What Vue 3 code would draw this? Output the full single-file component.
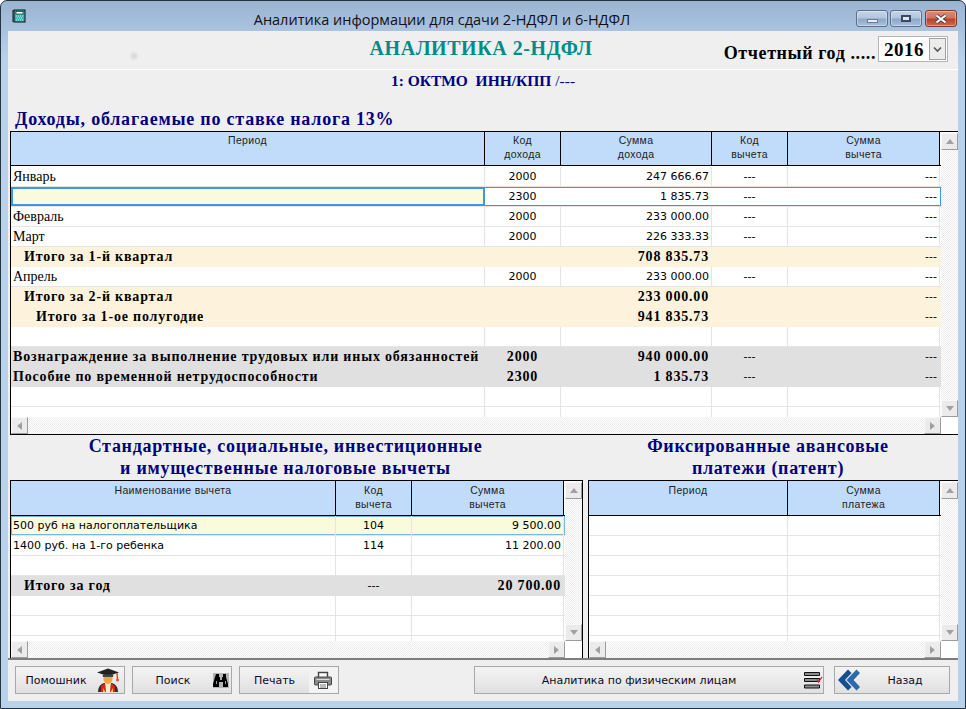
<template>
  <div class="window">
    <!-- Title bar -->
    <div class="titlebar">
      <svg class="app-icon" width="14" height="14" viewBox="0 0 14 14">
        <rect x="2" y="1" width="11" height="12" fill="#2fb5b5" stroke="#111" />
        <rect x="4" y="2.5" width="7" height="2.5" fill="#fff" stroke="#111" stroke-width="0.6" />
        <path d="M4 7h1M6 7h1M8 7h1M10 7h1M5 9h1M7 9h1M9 9h1M4 11h1M6 11h1M8 11h1M10 11h1" stroke="#d8f5f5" />
        <path d="M0 2h2M0 4h2M0 6h2M0 8h2M0 10h2M0 12h2" stroke="#111" />
      </svg>
      <div class="title-text">Аналитика информации для сдачи 2-НДФЛ и 6-НДФЛ</div>
      <div class="win-btns">
        <div class="win-btn"><span class="glyph-min"></span></div>
        <div class="win-btn"><span class="glyph-max"></span></div>
        <div class="win-btn close">
          <svg width="16" height="10" viewBox="0 0 16 10">
            <path d="M3.5 1.5 L12.5 8.5 M12.5 1.5 L3.5 8.5" stroke="#4a3a3a" stroke-width="3.6" />
            <path d="M3.5 1.5 L12.5 8.5 M12.5 1.5 L3.5 8.5" stroke="#fff" stroke-width="2.2" />
          </svg>
        </div>
      </div>
    </div>

    <div class="client">
      <div class="top-strip">
        <div></div>
        <div class="main-title">АНАЛИТИКА 2-НДФЛ</div>
        <div class="year-box">
          <span class="year-label">Отчетный год .....</span>
          <div class="combo">
            <span class="combo-value">2016</span>
            <span class="combo-btn">
              <svg width="9" height="7" viewBox="0 0 9 7"><path d="M1 1.5 L4.5 5 L8 1.5" fill="none" stroke="#555" stroke-width="1.6" /></svg>
            </span>
          </div>
        </div>
      </div>
      <div class="org-line"><b>1: ОКТМО&nbsp;&nbsp;ИНН/КПП</b> /---</div>
      <div class="section-title">Доходы, облагаемые по ставке налога 13%</div>

      <!-- Income grid -->
      <div class="grid grid-income">
        <div class="viewport">
          <div class="grid-head">
            <div
              v-for="(col, i) in incomeColumns"
              :key="i"
              class="head-cell"
              :style="{ width: col.width + 'px' }"
            >{{ col.label }}<br v-if="col.label2" />{{ col.label2 }}</div>
          </div>
          <div
            v-for="(row, r) in incomeRows"
            :key="r"
            class="row"
            :class="row.kind"
          >
            <div
              v-for="(col, i) in incomeColumns"
              :key="i"
              class="cell"
              :class="col.align"
              :style="{ width: col.width + 'px', paddingLeft: i === 0 && row.indent ? row.indent + 'px' : null }"
            >{{ row.cells[i] }}</div>
          </div>
        </div>
        <div class="vscroll">
          <div class="sb-btn"><i class="tri up"></i></div>
          <div class="track"></div>
          <div class="sb-btn"><i class="tri down"></i></div>
        </div>
        <div class="hscroll">
          <div class="sb-btn"><i class="tri left"></i></div>
          <div class="track"></div>
          <div class="sb-btn"><i class="tri right"></i></div>
        </div>
        <div class="corner"></div>
      </div>

      <!-- Lower grids -->
      <div class="lower">
        <div v-for="panel in panels" :key="panel.id" class="panel" :class="panel.id">
          <div class="panel-title">{{ panel.title1 }}<br />{{ panel.title2 }}</div>
          <div class="grid">
            <div class="viewport">
              <div class="grid-head">
                <div
                  v-for="(col, i) in panel.columns"
                  :key="i"
                  class="head-cell"
                  :style="{ width: col.width + 'px' }"
                >{{ col.label }}<br v-if="col.label2" />{{ col.label2 }}</div>
              </div>
              <div
                v-for="(row, r) in panel.rows"
                :key="r"
                class="row"
                :class="row.kind"
              >
                <div
                  v-for="(col, i) in panel.columns"
                  :key="i"
                  class="cell"
                  :class="col.align"
                  :style="{ width: col.width + 'px', paddingLeft: i === 0 && row.indent ? row.indent + 'px' : null }"
                >{{ row.cells[i] }}</div>
              </div>
            </div>
            <div class="vscroll">
              <div class="sb-btn"><i class="tri up"></i></div>
              <div class="track"></div>
              <div class="sb-btn"><i class="tri down"></i></div>
            </div>
            <div class="hscroll">
              <div class="sb-btn"><i class="tri left"></i></div>
              <div class="track"></div>
              <div class="sb-btn"><i class="tri right"></i></div>
            </div>
            <div class="corner"></div>
          </div>
        </div>
      </div>

      <!-- Toolbar -->
      <div class="toolbar">
        <button class="btn btn-help">
          <span class="btn-label">Помошник</span>
          <svg width="24" height="26" viewBox="0 0 24 26">
            <path d="M2 25 Q2 18 8 16 L16 16 Q22 18 22 25 Z" fill="#3a2a22" />
            <path d="M9 16 L15 16 L14.5 25 L9.5 25 Z" fill="#f6efc8" />
            <path d="M5 19 L9 16 L10 25 L5 25 Z M19 19 L15 16 L14 25 L19 25 Z" fill="#d6261e" />
            <path d="M7 21 L9.5 25 L7 25 Z M17 21 L14.5 25 L17 25 Z" fill="#f4c430" />
            <ellipse cx="12" cy="11.5" rx="4.6" ry="5.4" fill="#f2a53e" />
            <path d="M1 5.5 L12 1.5 L23 5.5 L12 9 Z" fill="#222" />
            <path d="M6.5 7.5 L17.5 7.5 L17 10 L7 10 Z" fill="#444" />
            <path d="M21 6 L21.5 12" stroke="#d8442a" stroke-width="1.4" />
            <circle cx="21.5" cy="13" r="1.5" fill="#e05a28" />
          </svg>
        </button>
        <button class="btn btn-search">
          <span class="btn-label">Поиск</span>
          <svg class="binoculars" width="16" height="15" viewBox="0 0 16 15">
            <rect width="16" height="15" fill="#b4b4b4" />
            <path d="M3 1h3v3h1v2h2V4h1V1h3v3l2 7v3H10V9H6v5H0v-3l2-7z" fill="#000" />
            <path d="M3 8h1v3H3zM12 8h1v3h-1zM7 6h2v1H7z" fill="#999" />
          </svg>
        </button>
        <button class="btn btn-print">
          <span class="btn-label">Печать</span>
          <svg class="printer" width="29" height="26" viewBox="0 0 29 26">
            <rect width="29" height="26" fill="#f3f3f3" />
            <path d="M9.5 10 V5.5 H18.5 V10" fill="#fff" stroke="#444" stroke-width="1.4" />
            <rect x="5.5" y="10" width="17" height="8" rx="1" fill="#8a8a8a" stroke="#444" />
            <path d="M7.5 12.5 H20.5" stroke="#ddd" />
            <rect x="9.5" y="15.5" width="9" height="6" fill="#fff" stroke="#444" />
            <path d="M11 18h6M11 20h6" stroke="#777" />
          </svg>
        </button>
        <button class="btn btn-analytics">
          <span class="btn-label">Аналитика по физическим лицам</span>
          <svg width="20" height="18" viewBox="0 0 20 18">
            <path d="M1.5 1.5h15v3h-15zM1.5 7.5h15v3h-15zM1.5 14h15v3h-15z" fill="#8c8c8c" stroke="#111" stroke-width="1" />
            <path d="M14 8.5 L15.5 11 L19 6" fill="none" stroke="#e0202a" stroke-width="1.3" />
          </svg>
        </button>
        <button class="btn btn-back">
          <svg width="24" height="22" viewBox="0 0 24 22">
            <path d="M11 0.5 L1 11 L11 21.5 L14.5 18 L8 11 L14.5 4 Z" fill="#174e8e" />
            <path d="M19.5 0.5 L9.5 11 L19.5 21.5 L23 18 L16.5 11 L23 4 Z" fill="#2a69ad" />
          </svg>
          <span class="btn-label">Назад</span>
        </button>
      </div>
    </div>

    <div class="fleck"></div>
  </div>
</template>

<script setup>
const incomeColumns = [
  { width: 474, label: 'Период', align: 'l' },
  { width: 76, label: 'Код', label2: 'дохода', align: 'c' },
  { width: 151, label: 'Сумма', label2: 'дохода', align: 'r' },
  { width: 76, label: 'Код', label2: 'вычета', align: 'c' },
  { width: 152, label: 'Сумма', label2: 'вычета', align: 'r' }
]

const incomeRows = [
  { kind: 'month', cells: ['Январь', '2000', '247 666.67', '---', '---'] },
  { kind: 'current', cells: ['', '2300', '1 835.73', '---', '---'] },
  { kind: 'month', cells: ['Февраль', '2000', '233 000.00', '---', '---'] },
  { kind: 'month', cells: ['Март', '2000', '226 333.33', '---', '---'] },
  { kind: 'total', indent: 13, cells: ['Итого за 1-й квартал', '', '708 835.73', '', '---'] },
  { kind: 'month', cells: ['Апрель', '2000', '233 000.00', '---', '---'] },
  { kind: 'total', indent: 13, cells: ['Итого за 2-й квартал', '', '233 000.00', '', '---'] },
  { kind: 'total', indent: 25, cells: ['Итого за 1-ое полугодие', '', '941 835.73', '', '---'] },
  { kind: '', cells: ['', '', '', '', ''] },
  { kind: 'summary', cells: ['Вознаграждение за выполнение трудовых или иных обязанностей', '2000', '940 000.00', '---', '---'] },
  { kind: 'summary', cells: ['Пособие по временной нетрудоспособности', '2300', '1 835.73', '---', '---'] },
  { kind: '', cells: ['', '', '', '', ''] },
  { kind: '', cells: ['', '', '', '', ''] }
]

const panels = [
  {
    id: 'deductions',
    title1: 'Стандартные, социальные, инвестиционные',
    title2: 'и имущественные налоговые вычеты',
    columns: [
      { width: 325, label: 'Наименование вычета', align: 'l' },
      { width: 76, label: 'Код', label2: 'вычета', align: 'c' },
      { width: 152, label: 'Сумма', label2: 'вычета', align: 'r' }
    ],
    rows: [
      { kind: 'picked', cells: ['500 руб на налогоплательщика', '104', '9 500.00'] },
      { kind: 'plain', cells: ['1400 руб. на 1-го ребенка', '114', '11 200.00'] },
      { kind: '', cells: ['', '', ''] },
      { kind: 'year', indent: 13, cells: ['Итого за год', '---', '20 700.00'] },
      { kind: '', cells: ['', '', ''] },
      { kind: '', cells: ['', '', ''] },
      { kind: '', cells: ['', '', ''] }
    ]
  },
  {
    id: 'patents',
    title1: 'Фиксированные авансовые',
    title2: 'платежи (патент)',
    columns: [
      { width: 199, label: 'Период', align: 'l' },
      { width: 152, label: 'Сумма', label2: 'платежа', align: 'r' }
    ],
    rows: Array.from({ length: 7 }, () => ({ kind: '', cells: ['', ''] }))
  }
]
</script>

<style>
body {
  background: #fff;
}
</style>

<style scoped>
.window {
  width: 966px;
  height: 709px;
  box-sizing: border-box;
  display: flex;
  flex-direction: column;
  padding: 0 7px 7px;
  border: 1px solid #27333f;
  border-radius: 7px 7px 0 0;
  background: linear-gradient(#9ab4d2, #b9d2ec 60px, #b9d2ec);
  font-family: "DejaVu Sans", sans-serif;
  overflow: hidden;
  position: relative;
}

.titlebar {
  height: 30px;
  flex: none;
  display: flex;
  align-items: center;
  position: relative;
}

.app-icon {
  margin: 0 0 0 4px;
  flex: none;
}

.title-text {
  flex: 1;
  text-align: center;
  font-family: "Open Sans", sans-serif;
  font-size: 14.5px;
  color: #111;
  margin-top: 7px;
  padding-left: 2px;
}

.win-btns {
  display: flex;
  gap: 2px;
  margin: 0 1px 0 0;
  align-self: flex-start;
  padding-top: 9px;
}

.win-btn {
  width: 32px;
  height: 17px;
  box-sizing: border-box;
  border: 1px solid #5b6f88;
  border-radius: 3px;
  background: linear-gradient(#c4d5e8 0, #b0c6de 48%, #8ba7c6 52%, #a9c0da 100%);
  display: flex;
  align-items: center;
  justify-content: center;
  box-shadow: inset 0 0 0 1px rgba(255, 255, 255, 0.35);
}

.win-btn.close {
  margin-left: 1px;
  border-color: #7a3a30;
  background: linear-gradient(#d98a78 0, #cf7560 48%, #b8402a 52%, #cc6a50 100%);
}

.glyph-min {
  width: 9px;
  height: 2px;
  background: #e8eef5;
  border: 1px solid #6a7a90;
  margin-top: 4px;
}

.glyph-max {
  width: 6px;
  height: 3px;
  border: 2px solid #3a4a60;
  background: #dfe7f0;
}

.client {
  flex: 1;
  min-height: 0;
  display: flex;
  flex-direction: column;
  background: #efefef;
}

.top-strip {
  height: 38px;
  flex: none;
  box-sizing: content-box;
  border-bottom: 1px solid #fff;
  display: grid;
  grid-template-columns: 1fr auto 1fr;
  align-items: start;
}

.main-title {
  font-family: "Liberation Serif", serif;
  font-weight: bold;
  font-size: 20px;
  line-height: 24px;
  padding-top: 5px;
  color: #008b8b;
  letter-spacing: 0.55px;
  margin-left: -4px;
}

.year-box {
  justify-self: end;
  display: flex;
  align-items: center;
  padding: 5px 10px 0 0;
}

.year-label {
  font-family: "Liberation Serif", serif;
  font-weight: bold;
  font-size: 18px;
  line-height: 26px;
  color: #000;
  letter-spacing: 0.6px;
  margin-right: 2px;
  padding-top: 4px;
  box-sizing: border-box;
  height: 26px;
}

.combo {
  width: 70px;
  height: 26px;
  box-sizing: border-box;
  border: 1px solid #b4b4b4;
  background: #fff;
  display: flex;
  align-items: center;
  justify-content: space-between;
}

.combo-value {
  font-family: "Liberation Serif", serif;
  font-weight: bold;
  font-size: 19px;
  color: #000;
  padding-left: 5px;
  letter-spacing: 0.5px;
  margin-top: 1px;
}

.combo-btn {
  width: 17px;
  height: 22px;
  box-sizing: border-box;
  margin-right: 1px;
  border: 1px solid #a0a0a0;
  background: #ececec;
  display: flex;
  align-items: center;
  justify-content: center;
}

.org-line {
  height: 38px;
  flex: none;
  padding-top: 1px;
  box-sizing: border-box;
  text-align: center;
  font-family: "Liberation Serif", serif;
  font-size: 15.5px;
  line-height: 20px;
  color: #000080;
}

.section-title {
  height: 23px;
  flex: none;
  padding-left: 7px;
  font-family: "Liberation Serif", serif;
  font-weight: bold;
  font-size: 18px;
  line-height: 23px;
  letter-spacing: 0.78px;
  color: #000080;
}

.grid {
  display: grid;
  grid-template-columns: 1fr 17px;
  grid-template-rows: 1fr 17px;
  border: 1px solid #000;
  border-right: none;
  box-sizing: border-box;
  background: #fff;
  overflow: hidden;
}

.grid-income {
  height: 304px;
  flex: none;
  margin-left: 2px;
}

.viewport {
  overflow: hidden;
  min-width: 0;
  min-height: 0;
}

.grid-head {
  display: flex;
  height: 35px;
  border-bottom: 1px solid #000;
  box-sizing: border-box;
}

.grid-income .grid-head {
  height: 34px;
  margin-bottom: 1px;
}

.head-cell {
  flex: none;
  box-sizing: border-box;
  background: #c1dcfb;
  border-right: 1px solid #000;
  text-align: center;
  font-family: "Liberation Sans", sans-serif;
  font-size: 10.5px;
  line-height: 14px;
  padding-top: 2px;
  letter-spacing: 0.35px;
  color: #222;
}

.grid-income .head-cell {
  padding-top: 1px;
}

.row {
  display: flex;
  height: 20px;
  box-sizing: border-box;
  border-bottom: 1px solid #e4e4e4;
}

.cell {
  flex: none;
  box-sizing: border-box;
  border-right: 1px solid #e4e4e4;
  padding: 1px 2px 0;
  font-size: 11px;
  line-height: 18px;
  color: #000;
  white-space: nowrap;
  overflow: hidden;
}

.cell.c {
  text-align: center;
}

.cell.r {
  text-align: right;
}

.month .cell.l {
  font-family: "Liberation Serif", serif;
  font-size: 14px;
}

.current {
  box-shadow: inset 0 0 0 1px #3b97e6;
}

.current .cell {
  border-right-color: transparent;
}

.current .cell.l {
  background: #fafadd;
  border: 2px solid #3b97e6;
  line-height: 15px;
}

.total {
  background: #fdf3dc;
}

.summary {
  background: #e0e0e0;
}

.total,
.summary {
  border-bottom-color: transparent;
}

.total .cell,
.summary .cell {
  border-right-color: transparent;
  font-family: "Liberation Serif", serif;
  font-size: 14px;
  font-weight: bold;
  letter-spacing: 0.82px;
}

.total .cell:last-child,
.summary .cell:nth-child(4),
.summary .cell:last-child {
  font-weight: normal;
  font-family: "DejaVu Sans", sans-serif;
  font-size: 11px;
  letter-spacing: 0;
}

.picked {
  background: #fafadd;
  box-shadow: inset 0 0 0 1px #7fb4de;
}

.year {
  background: #e0e0e0;
  border-bottom-color: transparent;
}

.year .cell {
  border-right-color: transparent;
}

.year .cell.l,
.year .cell.r {
  font-family: "Liberation Serif", serif;
  font-size: 14px;
  font-weight: bold;
  letter-spacing: 0.82px;
}

.vscroll {
  display: flex;
  flex-direction: column;
  padding-top: 1px;
  background: #fff;
}

.hscroll {
  display: flex;
}

.track {
  flex: 1;
  background: repeating-conic-gradient(#ececec 0 25%, #fff 0 50%) 0 0 / 2px 2px;
}

.corner {
  background: #fff;
}

.sb-btn {
  width: 17px;
  height: 17px;
  flex: none;
  box-sizing: border-box;
  background: #ebebeb;
  border: 1px solid;
  border-color: #f8f8f8 #9c9c9c #9c9c9c #f8f8f8;
  display: flex;
  align-items: center;
  justify-content: center;
}

.tri {
  width: 0;
  height: 0;
  display: block;
  border: 4px solid transparent;
}

.tri.up {
  border-top-width: 0;
  border-bottom: 5px solid #a0a0a0;
}

.tri.down {
  border-bottom-width: 0;
  border-top: 5px solid #a0a0a0;
}

.tri.left {
  border-left-width: 0;
  border-right: 5px solid #a0a0a0;
}

.tri.right {
  border-right-width: 0;
  border-left: 5px solid #a0a0a0;
}

.lower {
  flex: none;
  height: 223px;
  display: flex;
  margin-left: 2px;
}

.panel {
  display: flex;
  flex-direction: column;
  min-width: 0;
}

.panel.deductions {
  width: 573px;
  margin-right: 5px;
}

.panel.patents {
  flex: 1;
}

.panel .grid {
  flex: 1;
  min-height: 0;
  border-bottom: none;
}

.panel.deductions .grid {
  border-right: 1px solid #000;
}

.panel-title {
  height: 45px;
  flex: none;
  box-sizing: border-box;
  text-align: center;
  font-family: "Liberation Serif", serif;
  font-weight: bold;
  font-size: 18px;
  line-height: 22px;
  letter-spacing: 0.72px;
  color: #000080;
}

.deductions .panel-title {
  padding-right: 22px;
}

.patents .panel-title {
  padding-right: 10px;
}

.toolbar {
  flex: 1;
  min-height: 0;
  border-top: 2px solid #7e7e7e;
  display: flex;
  align-items: flex-start;
  gap: 7px;
  padding: 6px 8px 0 7px;
}

.btn {
  height: 28px;
  box-sizing: border-box;
  padding: 0 4px 0 0;
  border: 1px solid #a8a8a8;
  background: linear-gradient(#f4f4f4, #e0e0e0);
  display: flex;
  align-items: center;
  font-family: "DejaVu Sans", sans-serif;
  font-size: 11px;
  color: #0a0a2a;
}

.btn-label {
  flex: 1;
  text-align: center;
}

.btn-help {
  width: 110px;
}

.btn-search,
.btn-print {
  width: 100px;
}

.binoculars {
  margin-right: -2px;
}

.btn-print {
  padding-right: 0;
}

.btn-analytics {
  width: 350px;
  margin-left: auto;
  padding-right: 0;
}

.btn-back {
  width: 116px;
  margin-left: 3px;
  padding: 0 0 0 2px;
}

.fleck {
  position: absolute;
  left: 128px;
  top: 50px;
  width: 10px;
  height: 10px;
  border-radius: 50%;
  background: radial-gradient(circle, #d4d4d4, transparent 70%);
}
</style>
